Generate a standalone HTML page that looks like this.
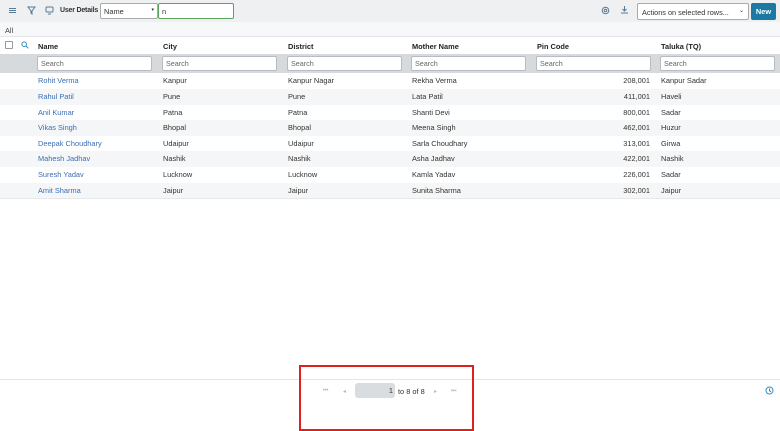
<!DOCTYPE html>
<html><head><style>
*{box-sizing:border-box;margin:0;padding:0}
body{width:780px;height:431px;overflow:hidden;background:#fff;font-family:"Liberation Sans",sans-serif;font-size:7.4px;color:#333;position:relative}
.top{position:absolute;left:0;top:0;width:780px;height:22px;background:#eef0f2}
.all{position:absolute;left:0;top:22px;width:780px;height:15px;background:#f7f8f9;border-bottom:1px solid #e3e5e8}
.ab{position:absolute}
.hdr{position:absolute;top:37px;left:0;width:780px;height:17px;background:#fff;font-weight:bold;color:#222}
.flt{position:absolute;top:54px;left:0;width:780px;height:19px;background:#d7dadd}
.inp{position:absolute;top:2px;height:15px;width:115px;background:#fff;border:1px solid #b8bcc0;border-radius:2px;padding-left:3px;line-height:13px;color:#666;font-size:7.2px}
.row{position:absolute;left:0;width:780px;height:15.6px;line-height:16.5px}
.row span{position:absolute}
.g{background:#f5f6f7}
.nm{color:#3a6fb5}
</style></head><body>
<div class="top"></div>
<div class="ab" style="left:9px;top:8px;width:7px;height:1px;background:#5b7a95;box-shadow:0 2px 0 #5b7a95,0 4px 0 #5b7a95"></div>
<svg class="ab" style="left:27px;top:6px" width="9" height="9" viewBox="0 0 9 9"><path d="M1 1h7L5 5v3L4 7V5z" fill="none" stroke="#5b7a95" stroke-width="1"/></svg>
<svg class="ab" style="left:45px;top:6px" width="9" height="9" viewBox="0 0 9 9"><rect x="1" y="1" width="7" height="5" rx="1" fill="none" stroke="#5b7a95"/><path d="M3 8h3" stroke="#5b7a95"/></svg>
<div class="ab" style="left:60px;top:7px;font-weight:bold;color:#333;font-size:7px;letter-spacing:-0.2px">User Details</div>
<div class="ab" style="left:100px;top:3px;width:58px;height:16px;background:#fff;border:1px solid #aaa;border-radius:2px;padding:3px 3px;color:#333">Name<span style="position:absolute;right:3px;top:3px;font-size:5px">▾</span></div>
<div class="ab" style="left:158px;top:3px;width:76px;height:16px;background:#fff;border:1.5px solid #5aa55a;border-radius:2px;padding:3px 3px">n</div>
<svg class="ab" style="left:601px;top:6px" width="9" height="9" viewBox="0 0 9 9"><circle cx="4.5" cy="4.5" r="3.3" fill="none" stroke="#5b7a95"/><circle cx="4.5" cy="4.5" r="1.3" fill="none" stroke="#5b7a95"/></svg>
<svg class="ab" style="left:620px;top:5px" width="9" height="10" viewBox="0 0 9 10"><path d="M4.5 1v5M2.5 4l2 2 2-2M1 8h7" fill="none" stroke="#5b7a95"/></svg>
<div class="ab" style="left:637px;top:3px;width:112px;height:17px;background:#fff;border:1px solid #aaa;border-radius:2px;padding:4px 4px;color:#333;font-size:7.3px">Actions on selected rows...<span style="position:absolute;right:4px;top:3px;font-size:6px">⌄</span></div>
<div class="ab" style="left:751px;top:3px;width:25px;height:17px;background:#1a7aa3;border-radius:2px;color:#fff;font-weight:bold;text-align:center;line-height:17px">New</div>
<div class="all"><span class="ab" style="left:5px;top:4px;color:#444">All</span></div>
<div class="hdr">
<div class="ab" style="left:5px;top:4px;width:8px;height:8px;border:1px solid #999;border-radius:1px;background:#fff"></div>
<svg class="ab" style="left:21px;top:4px" width="8" height="8" viewBox="0 0 8 8"><circle cx="3.2" cy="3.2" r="2.3" fill="none" stroke="#3a8cc0"/><path d="M5 5l2.3 2.3" stroke="#3a8cc0"/></svg>
<span class="ab" style="left:38px;top:5px">Name</span><span class="ab" style="left:163px;top:5px">City</span><span class="ab" style="left:288px;top:5px">District</span><span class="ab" style="left:412px;top:5px">Mother Name</span><span class="ab" style="left:537px;top:5px">Pin Code</span><span class="ab" style="left:661px;top:5px">Taluka (TQ)</span>
</div>
<div class="flt">
<div class="inp" style="left:37px">Search</div><div class="inp" style="left:162px">Search</div><div class="inp" style="left:287px">Search</div><div class="inp" style="left:411px">Search</div><div class="inp" style="left:536px">Search</div><div class="inp" style="left:660px">Search</div>
</div>
<div class="row" style="top:73px"><span class="nm" style="left:38px">Rohit Verma</span><span style="left:163px">Kanpur</span><span style="left:288px">Kanpur Nagar</span><span style="left:412px">Rekha Verma</span><span style="right:130px">208,001</span><span style="left:661px">Kanpur Sadar</span></div>
<div class="row g" style="top:89px"><span class="nm" style="left:38px">Rahul Patil</span><span style="left:163px">Pune</span><span style="left:288px">Pune</span><span style="left:412px">Lata Patil</span><span style="right:130px">411,001</span><span style="left:661px">Haveli</span></div>
<div class="row" style="top:104.5px"><span class="nm" style="left:38px">Anil Kumar</span><span style="left:163px">Patna</span><span style="left:288px">Patna</span><span style="left:412px">Shanti Devi</span><span style="right:130px">800,001</span><span style="left:661px">Sadar</span></div>
<div class="row g" style="top:120px"><span class="nm" style="left:38px">Vikas Singh</span><span style="left:163px">Bhopal</span><span style="left:288px">Bhopal</span><span style="left:412px">Meena Singh</span><span style="right:130px">462,001</span><span style="left:661px">Huzur</span></div>
<div class="row" style="top:135.5px"><span class="nm" style="left:38px">Deepak Choudhary</span><span style="left:163px">Udaipur</span><span style="left:288px">Udaipur</span><span style="left:412px">Sarla Choudhary</span><span style="right:130px">313,001</span><span style="left:661px">Girwa</span></div>
<div class="row g" style="top:151px"><span class="nm" style="left:38px">Mahesh Jadhav</span><span style="left:163px">Nashik</span><span style="left:288px">Nashik</span><span style="left:412px">Asha Jadhav</span><span style="right:130px">422,001</span><span style="left:661px">Nashik</span></div>
<div class="row" style="top:167px"><span class="nm" style="left:38px">Suresh Yadav</span><span style="left:163px">Lucknow</span><span style="left:288px">Lucknow</span><span style="left:412px">Kamla Yadav</span><span style="right:130px">226,001</span><span style="left:661px">Sadar</span></div>
<div class="row g" style="top:182.5px"><span class="nm" style="left:38px">Amit Sharma</span><span style="left:163px">Jaipur</span><span style="left:288px">Jaipur</span><span style="left:412px">Sunita Sharma</span><span style="right:130px">302,001</span><span style="left:661px">Jaipur</span></div>
<div class="ab" style="left:0;top:198px;width:780px;height:1px;background:#e6e8ea"></div>
<div class="ab" style="left:0;top:379px;width:780px;height:1px;background:#e3e5e8"></div>
<div class="ab" style="left:323px;top:388px;color:#aac0cc;font-size:6px">⏮</div>
<div class="ab" style="left:343px;top:388px;color:#aac0cc;font-size:6px">◂</div>
<div class="ab" style="left:355px;top:383px;width:40px;height:15px;background:#d9dde0;border-radius:3px;text-align:right;padding-right:2px;line-height:16px;color:#333">1</div>
<div class="ab" style="left:398px;top:387px;color:#333">to 8 of 8</div>
<div class="ab" style="left:434px;top:388px;color:#aac0cc;font-size:6px">▸</div>
<div class="ab" style="left:451px;top:388px;color:#aac0cc;font-size:6px">⏭</div>
<div class="ab" style="left:299px;top:365px;width:175px;height:66px;border:2px solid #e02020"></div>
<svg class="ab" style="left:765px;top:386px" width="9" height="9" viewBox="0 0 9 9"><circle cx="4.5" cy="4.5" r="3.5" fill="none" stroke="#3a8cc0"/><path d="M4.5 2.5v2.3l1.5 1" fill="none" stroke="#3a8cc0"/></svg>
</body></html>
